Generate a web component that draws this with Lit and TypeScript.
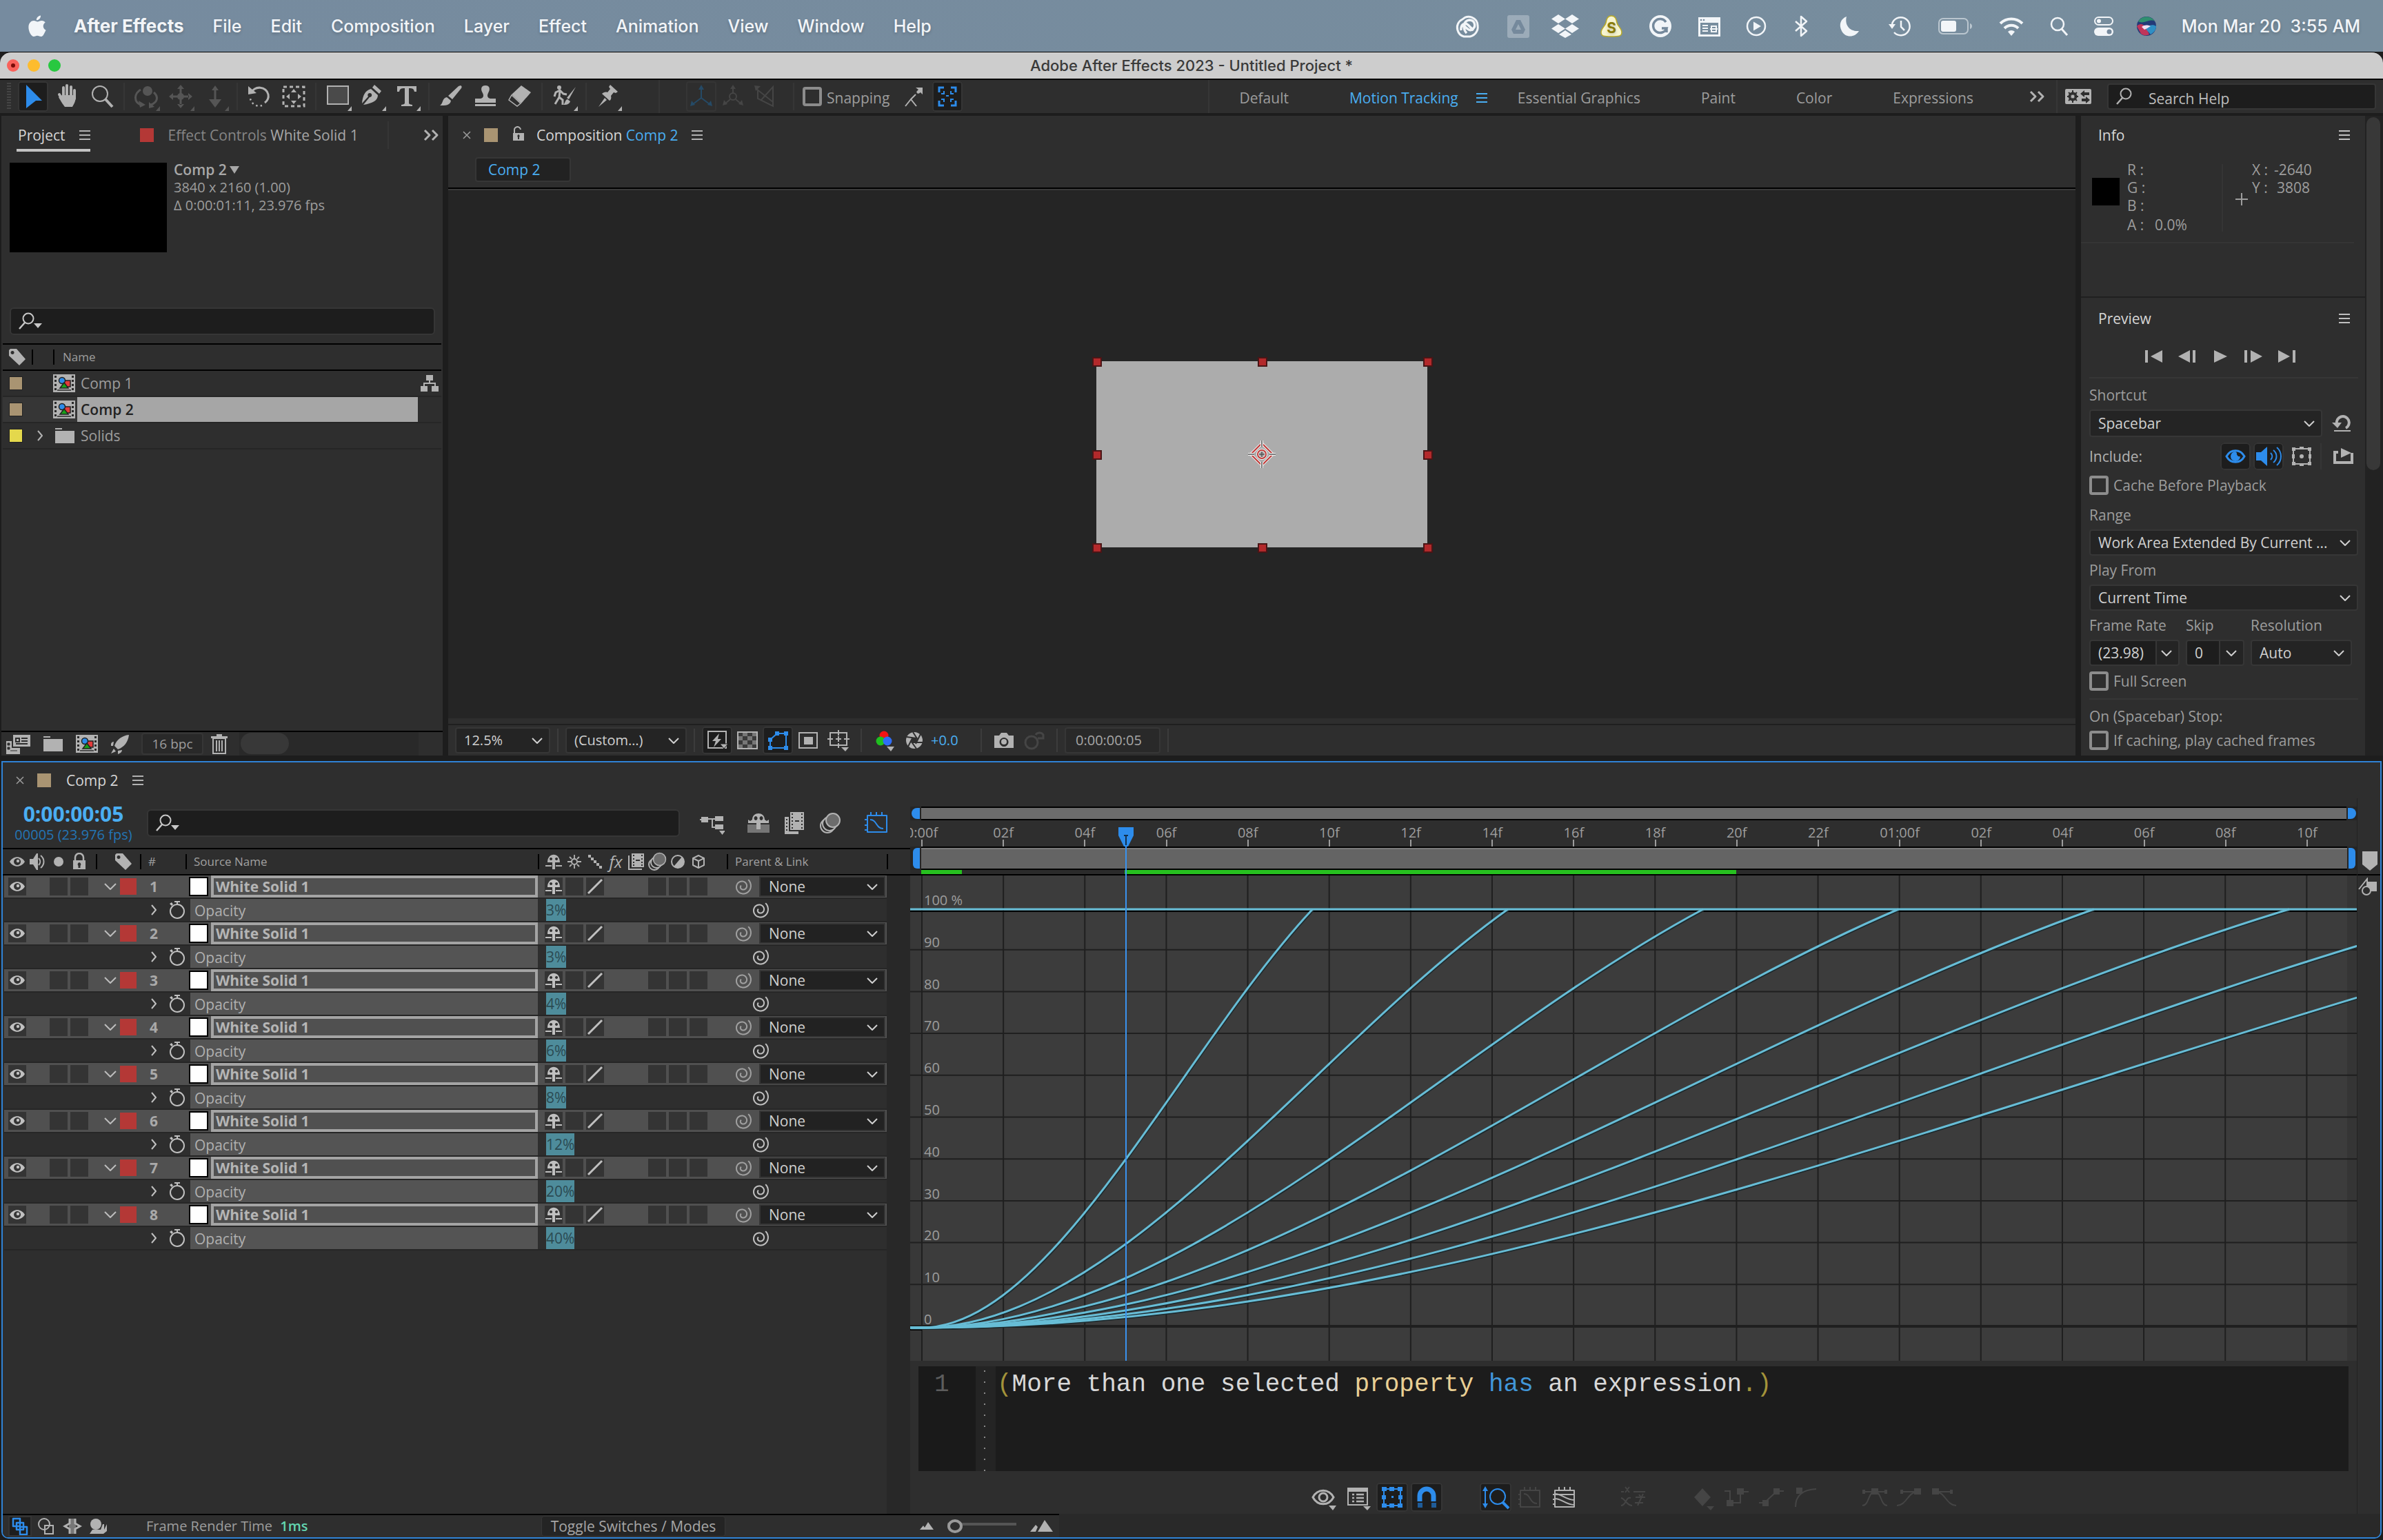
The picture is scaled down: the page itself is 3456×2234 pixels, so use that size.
import { LitElement, html, css, svg, nothing, TemplateResult, SVGTemplateResult } from "lit";
import { customElement } from "lit/decorators.js";
import { classMap } from "lit/directives/class-map.js";

/** An icon drawn around the origin, one unit per pixel. */
const ic = (w: number, h: number, body: SVGTemplateResult | SVGTemplateResult[]) =>
  html`<svg class="ic" aria-hidden="true" width=${w} height=${h} viewBox="${-w / 2} ${-h / 2} ${w} ${h}">${body}</svg>`;

const line = (d: string, w = 2) =>
  svg`<path d=${d} fill="none" stroke="currentColor" stroke-width=${w} stroke-linejoin="round"/>`;
const fill = (d: string) => svg`<path d=${d}/>`;
const corner = svg`<path d="M14 21h6v-7z"/>`;

/* ---------- menu bar ---------- */
const apple = ic(30, 36, svg`<path d="M5-15.500c.4 3.500-2.800 7-6.100 6.800C-1.500-12 1.600-15.200 5-15.500zM10.800 9.200C9.600 12 8 15 5.400 15c-2.100 0-2.800-1.300-5.300-1.300S-3.200 15-5.100 15C-8.400 15-12.600 8-12.600 1.500-12.600-4.800-8.600-8-5-8c2.300 0 4 1.500 5.500 1.500C1.900-6.500 3.900-8.200 6.800-8c2 .1 3.700.9 4.900 2.600C7.300-2.600 8 3.900 12.600 5.700z"/>`);

const status: TemplateResult[] = [
  ic(80, 36, svg`<path d="M-14 6A13 13 0 0 1-7-10 13 13 0 0 1 15-1 14 14 0 0 1 4 15h-9A13 13 0 0 1-14 6z" fill="none" stroke="currentColor" stroke-width="3"/><path d="M-9 6c-1-8 5-12 10-8L9 6M-1 10C-7 4-6-8 3-9c8 0 10 9 5 13-4 4-8 0-12-4" fill="none" stroke="currentColor" stroke-width="3.500"/>`),
  ic(68, 36, svg`<rect x="-16" y="-16" width="32" height="33" rx="3" opacity=".3"/><path d="M-3-9h6l7 14-3 6H-7l-3-6zM0-3l-4 8h8z" fill="#75899c" fill-rule="evenodd"/>`),
  ic(68, 36, svg`<path d="M-10-17l10 6.500-10 6.500-10-6.500zM10-17l10 6.500L10-4 0-10.500zM-10-3L0 3.500-10 10l-10-6.500zM10-3l10 6.500L10 10 0 3.500zM0 6l9 6-9 5-9-5z"/>`),
  ic(66, 36, svg`<path d="M0-15c6 0 7 5 8 10s7 8 7 14-5 6-15 6-15 0-15-6 6-9 7-14 2-10 8-10z" fill="#f7f5d0" stroke="#b9aa28" stroke-width="1.500"/><text x="0" y="10" text-anchor="middle" font-size="21" font-weight="700" fill="#8a7c0c">S</text>`),
  ic(76, 36, svg`<circle r="16"/><path d="M8-6A10 10 0 1 0 9 3H2M9 3v6" fill="none" stroke="#75899c" stroke-width="3.500"/>`),
  ic(66, 36, svg`<path d="M-16-13h32v28h-32zM-13-5v17h26V-5z" fill-rule="evenodd"/><circle cx="-12" cy="-9" r="1.300" fill="#75899c"/><circle cx="-8" cy="-9" r="1.300" fill="#75899c"/><path d="M-10-1h8M-10 3h8M-10 7h8M3 0h7v8H3zM1 4h11" fill="none" stroke="currentColor" stroke-width="2"/>`),
  ic(70, 36, svg`<circle r="13" fill="none" stroke="currentColor" stroke-width="2.500"/><path d="M-4-6.500L7 0-4 6.500z"/>`),
  ic(60, 36, line("M-8-7L8 7 0 14v-28l8 7L-8 7", 2.500)),
  ic(80, 36, fill("M-4-14C-7-2 0 8 14 7 8 17-6 17-11 7-16-3-12-11-4-14z")),
  ic(68, 36, svg`<path d="M-12-3A13 13 0 1 1-9 9M1-8V1l5 5" fill="none" stroke="currentColor" stroke-width="2.500"/><path d="M-17-3h10l-5 7z"/>`),
  ic(92, 36, svg`<rect x="-24" y="-11" width="42" height="22" rx="6" fill="none" stroke="currentColor" stroke-width="2" opacity=".55"/><rect x="-21" y="-8" width="22" height="16" rx="3"/><path d="M21-4c4 1 4 7 0 8z" opacity=".55"/>`),
  ic(70, 36, svg`<path d="M-16-4a23 23 0 0 1 32 0M-10 3a14 14 0 0 1 20 0" fill="none" stroke="currentColor" stroke-width="4"/><path d="M-5 8a7 7 0 0 1 10 0l-5 6z"/>`),
  ic(68, 36, svg`<circle cx="-2" cy="-3" r="9" fill="none" stroke="currentColor" stroke-width="2.500"/><path d="M4 4l8 9" stroke="currentColor" stroke-width="3"/>`),
  ic(62, 36, svg`<rect x="-13" y="-13" width="26" height="11" rx="5.500" fill="none" stroke="currentColor" stroke-width="2"/><circle cx="-7" cy="-7.500" r="3"/><rect x="-14" y="2" width="28" height="12" rx="6"/><circle cx="8" cy="8" r="3.500" fill="#75899c"/>`),
  ic(62, 36, svg`<circle r="14" fill="#243a78"/><path d="M-12-7A14 14 0 0 1 12-7C4-12-4-2-12-7z" fill="#2f8f6f"/><path d="M-14 0C-6-8 0 2 4 12 0 14-4 14-8 11z" fill="#c0355a"/><path d="M14 0C8-4 2 0-2 3l8 9c5-3 8-7 8-12z" fill="#2f8fc4"/><path d="M-7 1c4-3 8-3 13-1-4 2-6 4-9 5z" fill="#f1dff2"/>`),
];

/* ---------- tools ---------- */
const tool = (b: any) => ic(44, 44, b);
const tools: Array<[string, TemplateResult, string]> = [
  ["Selection", tool(fill("M-10-17l23 23-9 0-14 11z")), "on"],
  ["Hand", tool(svg`<path d="M-6-13v13M-1-16v16M5-14V0M10-9V3M-12-3L-7 6" stroke="currentColor" stroke-width="4" stroke-linecap="round" fill="none"/><path d="M-8-2H12C12 8 9 11 7 15H-4C-7 11-9 8-13 1z"/>`), ""],
  ["Zoom", tool(svg`<circle cx="-3" cy="-4" r="11" fill="none" stroke="currentColor" stroke-width="2"/><path d="M5 4l10 11" stroke="currentColor" stroke-width="4"/>`), ""],
  ["|", html``, ""],
  ["Orbit", tool(svg`<circle cx="2" cy="-8" r="7"/><path d="M-8-10C-18-4-18 8-8 12M11-6c7 6 6 14-4 18" fill="none" stroke="currentColor" stroke-width="3"/><path d="M-11 6l2 10 8-4zM4 8l0 9 8-2z"/>${corner}`), "dim"],
  ["Pan camera", tool(svg`<circle r="5"/><path d="M0-17l5 6H-5zM0 17l5-6H-5zM-17 0l6-5V5zM17 0l-6-5V5zM-12-1.500h24v3h-24zM-1.500-12h3v24h-3z"/>${corner}`), "dim"],
  ["Dolly", tool(svg`<path d="M0-16l5 7H-5zM-1.500-10h3V4h-3zM0 16L-9 4H9z"/>${corner}`), "dim"],
  ["|", html``, ""],
  ["Rotate", tool(svg`<path d="M-12-5A13 12 0 0 1 13-3c1 5-1 9-5 12" fill="none" stroke="currentColor" stroke-width="3"/><path d="M-16-15v12l12-2z"/><path d="M4 13A13 13 0 0 1-13 3" fill="none" stroke="currentColor" stroke-width="2.500" stroke-dasharray="2.500 4"/>`), ""],
  ["Pan behind", tool(svg`<rect x="-15" y="-14" width="30" height="28" fill="none" stroke="currentColor" stroke-width="3" stroke-dasharray="5 4"/><path d="M0-11l4 5h-8zM0 11l4-5h-8zM-11 0l5-4v8zM11 0L6-4v8z"/>`), ""],
  ["|", html``, ""],
  ["Rectangle", tool(svg`<rect x="-15" y="-15" width="30" height="26" fill="#4a4a4a" stroke="currentColor" stroke-width="2"/>${corner}`), ""],
  ["Pen", tool(svg`<path d="M3-17l10 9-3 4-10-9zM-2-11l10 9C8 6 0 10-13 12L-4 1a3 3 0 1 0-2-1l-9 10C-14-2-10-9-2-11z"/>${corner}`), ""],
  ["Text", tool(svg`<path d="M-14-15H14v8h-3c-1-4-2-5-8-5V9c0 2 1 2 5 3v2H-8v-2c4-1 5-1 5-3v-21c-6 0-7 1-8 5h-3z"/>${corner}`), ""],
  ["|", html``, ""],
  ["Brush", tool(svg`<path d="M14-16c2 1 2 2 1 4L2 4-4-1 11-15zM-6 1l6 5C-1 13-8 13-16 13-11 10-13 2-6 1z"/>`), ""],
  ["Clone stamp", tool(svg`<path d="M0-16c7 0 7 6 4 11C2-1 3 2 7 3h8v6h-30V3h8c4-1 5-4 3-8-3-5-3-11 4-11zM-15 11h30v3h-30z"/>`), ""],
  ["Eraser", tool(svg`<path d="M2-16L16-6 2 10-12-3z"/><path d="M-12-2l13 12-5 4-12-9z" fill="none" stroke="currentColor" stroke-width="1.500"/>`), ""],
  ["|", html``, ""],
  ["Roto brush", tool(svg`<circle cx="-7" cy="-13" r="3"/><path d="M-14 0l2-6 6-3 5 5 5 1M-6-8l-1 9-6 10M-7 1l5 4v7" fill="none" stroke="currentColor" stroke-width="3"/><path d="M17-14L7 4 4 2zM5 4l4 3C7 12 3 12-1 12 2 10 1 5 5 4z"/>${corner}`), ""],
  ["|", html``, ""],
  ["Puppet pin", tool(svg`<path d="M3-17l11 10-3 2-3-1-4 5c1 3 0 6-2 7L-9-4c2-2 5-3 8-2l4-5-2-3zM-5 2l3 3-12 10z"/>${corner}`), ""],
];
const axis = (b: SVGTemplateResult) => ic(44, 44, b);
const axes: Array<[string, TemplateResult, string]> = [
  ["Local axis", axis(svg`<path d="M0 2v-14M0 2l-12 9M0 2l12 9" stroke="currentColor" stroke-width="2" fill="none"/><path d="M0-17l4 7h-8zM-16 14l2-8 5 6zM16 14l-2-8-5 6z"/>`), "axis-on"],
  ["World axis", axis(svg`<circle r="5" fill="none" stroke="currentColor" stroke-width="2"/><path d="M0-5v-8M-4 4l-8 7M4 4l8 7" stroke="currentColor" stroke-width="2"/><path d="M0-17l4 6h-8zM-15 13l2-8 5 6zM15 13l-2-8-5 6z"/>`), "faint"],
  ["View axis", axis(svg`<path d="M-10-10V3L12 14V-14L-6 6M-12-11L12 8" stroke="currentColor" stroke-width="2" fill="none"/><path d="M-15-16l9 1-7 7z"/>`), "faint"],
];

/** A pick whip: nearly two turns winding in from the upper right. */
const spiral = () => {
  const pts: string[] = [];
  for (let i = 0; i <= 48; i++) {
    const a = ((-50 + i * 13) * Math.PI) / 180;
    const r = 12.8 - (i / 48) * 10.3;
    pts.push(`${(Math.cos(a) * r).toFixed(1)} ${(Math.sin(a) * r).toFixed(1)}`);
  }
  return "M" + pts.join("L");
};

const burger = ic(16, 16, fill("M-8-7H8v2H-8zM-8-1H8v2H-8zM-8 5H8v2H-8z"));
const more = ic(24, 18, line("M-10-7l7 7-7 7M1-7l7 7-7 7", 3));
const chev = ic(18, 12, line("M-7-3L0 4l7-7", 2));
const chevR = ic(12, 18, line("M-3-7L3 0l-6 7", 2));
const chevD = ic(18, 14, line("M-8-4L0 4l8-8", 2));
const lens = ic(38, 28, svg`<circle cx="-4" cy="-4" r="7.500" fill="none" stroke="currentColor" stroke-width="2"/><path d="M-9 2l-8 9" stroke="currentColor" stroke-width="2.500"/><path d="M4 3h12l-6 7z"/>`);
const lensPlain = ic(28, 28, svg`<circle cx="3" cy="-4" r="7.500" fill="none" stroke="currentColor" stroke-width="2"/><path d="M-2 2l-8 9" stroke="currentColor" stroke-width="2.500"/>`);
const cross = ic(14, 14, line("M-5-5L5 5M5-5L-5 5", 1.500));
const tag = ic(26, 26, svg`<path d="M-12-10l2-2H-1L12 3 3 12-12-2zM-7-9a2.500 2.500 0 1 0 .1 0z" fill-rule="evenodd"/>`);
const filmBody = svg`<path d="M-16-13h32v26h-32z"/><path d="M-14-11h3v3h-3zM-14-5h3v3h-3zM-14 1h3v3h-3zM-14 7h3v3h-3zM11-11h3v3h-3zM11-5h3v3h-3zM11 1h3v3h-3zM11 7h3v3h-3z" fill="#2a2a2a"/><rect x="0" y="-4" width="9" height="9" fill="#e23b3b" stroke="#222" stroke-width="1.500"/><circle cx="-3" cy="-4" r="4.500" fill="#2d8ceb" stroke="#222" stroke-width="1.500"/><path d="M0-1l6 8H-6z" fill="#18a018" stroke="#222" stroke-width="1.500"/><path d="M-10 10h20" stroke="#2a2a2a" stroke-width="1.500"/>`;
const film = ic(34, 28, filmBody);
const folder = ic(28, 24, fill("M-14-11h10v2h-10zM-14-7h28v18h-28z"));
const eye = ic(26, 22, svg`<path d="M-11 0C-6-9 6-9 11 0 6 9-6 9-11 0zM0-5a5 5 0 1 0 .1 0z" fill-rule="evenodd"/><circle cx="1" cy="-1" r="2.200"/>`);
const speaker = ic(26, 26, svg`<path d="M-12-4h5l5-8v24l-5-8h-5z"/><path d="M1-5c3 3 3 7 0 10M4-9c6 5 6 13 0 18" fill="none" stroke="currentColor" stroke-width="2"/><path d="M-2-12h2v24h-2z"/>`);
const lock = ic(26, 26, svg`<path d="M-9-2H9v13H-9zM0 1a3 3 0 0 0-1.500 5v3h3V6A3 3 0 0 0 0 1z" fill-rule="evenodd"/><path d="M-6-2v-4a6 6 0 0 1 12 0v4" fill="none" stroke="currentColor" stroke-width="2.500"/>`);
const unlock = ic(20, 26, svg`<path d="M-8-3H8v11H-8zM0-1a2.500 2.500 0 0 0-1 4v3h2V3A2.500 2.500 0 0 0 0-1z" fill-rule="evenodd"/><path d="M-6-3v-4a4.500 4.500 0 0 1 9-1" fill="none" stroke="currentColor" stroke-width="2"/>`);
const shy = ic(26, 24, svg`<path d="M-9 1C-9-14 9-14 9 1H2v10h-4V1zM-4-6a2 2 0 1 0 .1 0zM4-6a2 2 0 1 0 .1 0z" fill-rule="evenodd"/><path d="M-12 6h9M3 6h9" stroke="currentColor" stroke-width="2"/>`);
const sun = ic(26, 24, svg`<circle r="4" fill="none" stroke="currentColor" stroke-width="2"/><path d="M0-10v5M0 5v5M-10 0h5M5 0h5M-7-7l3 3M7 7L4 4M-7 7l3-3M7-7L4-4" stroke="currentColor" stroke-width="1.800"/>`);
const steps = ic(26, 24, fill("M-10-10h4v4h-4zM-6-6h4v4h-4zM-2-2h4v4h-4zM2 2h4v4H2zM6 6h4v4H6z"));
const blend = ic(26, 26, svg`<path d="M-7-12h18V8H-7zM-5-10v2h2v-2zM-5-5v2h2v-2zM-5 0v2h2v-2zM-5 4v2h2V4zM7-10v2h2v-2zM7-5v2h2v-2zM7 0v2h2v-2zM7 4v2h2V4zM-1-3v2h6v-2z" fill-rule="evenodd"/><path d="M-11-9v20H8" fill="none" stroke="currentColor" stroke-width="2"/>`);
const blur = ic(28, 28, svg`<circle cx="-4" cy="4" r="8" fill="#2e2e2e" stroke="currentColor" stroke-width="2"/><circle cx="-1" cy="1" r="8" fill="#2e2e2e" stroke="currentColor" stroke-width="2"/><circle cx="3.500" cy="-3.500" r="9" fill="#6c6c6c" stroke="currentColor" stroke-width="1.500"/>`);
const adjust = ic(26, 24, svg`<circle r="9" fill="none" stroke="currentColor" stroke-width="2"/><path d="M6-7A9 9 0 0 1-6 7z"/>`);
const cube = ic(26, 24, line("M0-9l8 4V5L0 9l-8-4V-5zM-8-5L0-1l8-4M0-1V9", 2));
const quality = ic(26, 26, line("M-10 10L10-10", 3));
const whip = ic(26, 26, line(spiral(), 2));
const stopwatch = ic(26, 28, svg`<circle cx="0" cy="2" r="10" fill="none" stroke="currentColor" stroke-width="2"/><path d="M-4-13h8v2h-8zM-1-12h2v4h-2zM-11-9l3-2 2 3-2 2z"/>`);

/* ---------- footer and graph icons ---------- */
const mainIcons: Record<string, TemplateResult> = {
  interpret: ic(36, 32, svg`<path d="M-8-13h25V4H-8z"/><path d="M-4-8h5v5h-5zM4-8h9M4-4h9M-4 0h17" fill="none" stroke="#2e2e2e" stroke-width="2"/><path d="M-18-4h8V6H2v9h-20z"/><path d="M-16-1h3v3h-3zM-16 5h3v3h-3zM-12 10h10" fill="#2e2e2e" stroke="#2e2e2e"/>`),
  rocket: ic(26, 30, fill("M13-13C3-12-5-6-8 3l5 5C6 5 12-3 13-13zM-9-3c-3 0-5 3-4 6h3zM3 9c0 3-3 5-6 6V10zM-9 7l-4 7 7-3z")),
  trash: ic(26, 32, svg`<path d="M-9-8H9V14H-9z" fill="none" stroke="currentColor" stroke-width="2"/><path d="M-12-11h24v3h-24zM-4-14h8v3h-8zM-5-5h2v16h-2zM-1-5h2v16h-2zM3-5h2v16H3z"/>`),
  flow: ic(28, 28, svg`<path d="M-5-12H5v8H-5zM-13 4h10v8h-10zM3 4h10v8H3z"/><path d="M0-4v4M-8 4V0H8v4" fill="none" stroke="currentColor" stroke-width="2"/>`),
  fast: ic(36, 32, svg`<path d="M-13-13H13V11H-13z" fill="none" stroke="currentColor" stroke-width="2"/><path d="M3-10L-7 1h5l-3 9L6-2H1z"/><path d="M4 5h12l-6 7z" stroke="#1d1d1d"/>`),
  checker: ic(32, 32, svg`<path d="M-14-12h28v24h-28z" fill="#777"/><path d="M-14-12h7v6h-7zM0-12h7v6H0zM-7-6h7v6h-7zM7-6h7v6H7zM-14 0h7v6h-7zM0 0h7v6H0zM-7 6h7v6h-7zM7 6h7v6H7z" fill="#3a3a3a"/><path d="M-14-12h28v24h-28z" fill="none" stroke="currentColor" stroke-width="2"/>`),
  mask: ic(36, 32, svg`<path d="M-11 11V-1L-1-10h13v21z" fill="none" stroke="currentColor" stroke-width="2"/><path d="M-14 8h6v6h-6zM9 8h6v6H9zM9-13h6v6H9zM-4-13h6v6h-6zM-14-4h6v6h-6z"/>`),
  region: ic(32, 32, svg`<rect x="-13" y="-11" width="26" height="22" fill="none" stroke="currentColor" stroke-width="2"/><rect x="-6" y="-5" width="13" height="11"/>`),
  grid: ic(36, 34, svg`<rect x="-12" y="-11" width="24" height="18" fill="none" stroke="currentColor" stroke-width="2"/><path d="M0-15v8M0 4v7M-16-2h8M8-2h8M-4-2h8M0-6v8" stroke="currentColor" stroke-width="2"/><path d="M4 10h11l-5 6z"/>`),
  rgb: ic(30, 34, svg`<circle cx="0" cy="-7" r="6.500" fill="#f21414"/><circle cx="-5" cy="1" r="6.500" fill="#1fc01f"/><circle cx="5" cy="1" r="6.500" fill="#2f6df6"/><path d="M4 9h11l-5 7z"/>`),
  aperture: ic(30, 30, svg`<circle r="12"/><path d="M-11-5L3-3M-2-12l7 11M9-9L2 5M12 3L-3 3M3 12L-5 1M-9 9l6-12" stroke="#2e2e2e" stroke-width="2"/><circle r="4" fill="#2e2e2e"/>`),
  camera: ic(32, 28, svg`<path d="M-14-7h7l3-4h8l3 4h7V11h-28zM0-4a6.500 6.500 0 1 0 .1 0z" fill-rule="evenodd"/><circle cy="2" r="4"/>`),
  snap: ic(34, 30, svg`<circle cx="-4" cy="3" r="9" fill="none" stroke="currentColor" stroke-width="3"/><path d="M2-8a6 5 0 0 1 11 0v5H5" fill="none" stroke="currentColor" stroke-width="3"/>`),
};

const graphTools: Array<Array<[string, TemplateResult, string]>> = [
  [
    ["Show properties", ic(42, 38, svg`<path d="M-15 0C-8-13 8-13 15 0 8 13-8 13-15 0z" fill="none" stroke="currentColor" stroke-width="3"/><circle r="6" fill="none" stroke="currentColor" stroke-width="3"/><path d="M8 12h11l-5 7z"/>`), ""],
    ["Graph type", ic(42, 38, svg`<path d="M-14-13h28v24h-28z" fill="none" stroke="currentColor" stroke-width="2"/><path d="M-14-13h28v5h-28z"/><path d="M-8-4h3M-2-4H9M-8 1h3M-2 1H9M-8 6h3M-2 6H9" stroke="currentColor" stroke-width="2.500"/><path d="M8 13h11l-5 6z"/>`), ""],
    ["Transform box", ic(42, 38, svg`<rect x="-12" y="-12" width="24" height="24" fill="none" stroke="currentColor" stroke-width="2"/><path d="M-15-15h7v6h-7zM-4-15h7v6h-7zM8-15h7v6H8zM-15 9h7v6h-7zM-4 9h7v6h-7zM8 9h7v6H8zM-15-3h6v6h-6zM9-3h6v6H9zM-1-2h3v3h-3z"/>`), "on"],
    ["Snap", ic(42, 38, svg`<path d="M-10 6V-2a10 10 0 0 1 20 0v8" fill="none" stroke="currentColor" stroke-width="7"/><path d="M-13 8h7v7h-7zM7 8h7v7H7z" fill="#1f5c99"/>`), "on"],
  ],
  [
    ["Auto-zoom", ic(42, 38, svg`<circle cx="3" cy="-1" r="11" fill="none" stroke="currentColor" stroke-width="2"/><path d="M10 7l9 9" stroke="currentColor" stroke-width="4"/><path d="M-15-10v22" stroke="currentColor" stroke-width="2"/><path d="M-15-16l4 7h-8zM-15 16l4-7h-8z"/>`), "on"],
    ["Fit selection", ic(42, 38, line("M-14-10h28v24h-28zM-9-5c10 0 8 14 19 14M-8-15v5M0-15v5M8-15v5M-17-4h3M-17 3h3M-17 10h3", 2)), "faint"],
    ["Fit all graphs", ic(42, 38, line("M-14-10h28v24h-28zM-14-5C-4-5 2 4 14 4M-14 2C-4 2 2 11 14 11M-14-4h28M-8-15v5M0-15v5M8-15v5M-17-4h3M-17 3h3M-17 10h3", 2)), ""],
  ],
  [["Separate dimensions", ic(42, 38, line("M-12-15l6 8M-6-15l-6 8M-18-8h4M0-8H17M-18 12C-10 12-12-1-4 1M-18 1C-12 2-10 12-2 12M3 0h14M2 8h12M8-4l3 4M14-5L6 12", 2)), "faint"]],
  [
    ["Edit keyframes", ic(42, 38, svg`<path d="M0-13L12 0 0 13-12 0z"/><path d="M6 13h11l-5 6z"/>`), "faint"],
    ["Hold", ic(42, 38, svg`<path d="M-18-9h8V8M5-9v17h-12" fill="none" stroke="currentColor" stroke-width="2"/><path d="M-15 4h10v9h-10zM0-13h10v9H0zM10-9h7v2h-7z"/>`), "faint"],
    ["Linear", ic(42, 38, svg`<path d="M-18 8h8M-8 6L7-8M8-9h10" fill="none" stroke="currentColor" stroke-width="2"/><path d="M-13 4h9v9h-9zM3-13h9v9H3z"/>`), "faint"],
    ["Auto Bezier", ic(42, 38, svg`<path d="M-15 14C-15 0-8-11 15-12" fill="none" stroke="currentColor" stroke-width="2"/><path d="M-14-14h9v9h-9z"/>`), "faint"],
  ],
  [
    ["Easy ease", ic(42, 38, svg`<path d="M-18 12C-8 12-10-8 0-8S8 12 18 12M-17-8h34" fill="none" stroke="currentColor" stroke-width="2"/><path d="M-5-13H5v9H-5zM-18-11h4v6h-4zM14-11h4v6h-4z"/>`), "faint"],
    ["Easy ease in", ic(42, 38, svg`<path d="M-18 12C-4 12-2-8 12-8M-10-8H10" fill="none" stroke="currentColor" stroke-width="2"/><path d="M7-13h10v9H7zM-13-11h4v6h-4z"/>`), "faint"],
    ["Easy ease out", ic(42, 38, svg`<path d="M18 12C4 12 2-8-12-8M10-8h-20" fill="none" stroke="currentColor" stroke-width="2"/><path d="M-17-13h10v9h-10zM9-11h4v6H9z"/>`), "faint"],
  ],
];

const transport: Array<[string, TemplateResult]> = [
  ["First frame", ic(26, 20, fill("M-13-9h4V9h-4zM12-9V9L-5 0z"))],
  ["Previous frame", ic(26, 20, fill("M4-9V9l-17-9zM8-9h4V9H8z"))],
  ["Play", ic(26, 20, fill("M-9-9L10 0-9 9z"))],
  ["Next frame", ic(26, 20, fill("M-13-9h4V9h-4zM-4-9v18l17-9z"))],
  ["Last frame", ic(26, 20, fill("M-12-9L5 0-12 9zM9-9h4V9H9z"))],
];

const menus = ["File", "Edit", "Composition", "Layer", "Effect", "Animation", "View", "Window", "Help"];
const opacities = [3, 3, 4, 6, 8, 12, 20, 40];
const rulerLabels = ["0:00f", "02f", "04f", "06f", "08f", "10f", "12f", "14f", "16f", "18f", "20f", "22f", "01:00f", "02f", "04f", "06f", "08f", "10f"];

/* Value graph geometry: 35 frames wide, each ramp lasts 0.4 s plus 0.2 s per layer. */
const X0 = 17, FRAME = 59.07, Y0 = 656, Y100 = 49, FPS = 23.976;
const ramp = (seconds: number) => {
  const w = seconds * FPS * FRAME, h = Y0 - Y100;
  return `M0 ${Y0}H${X0}C${X0 + w / 3} ${Y0} ${X0 + (w * 2) / 3} ${Y0 - (h * 2) / 3} ${X0 + w} ${Y100}`;
};
const ramps = [0.4, 0.6, 0.8, 1, 1.2, 1.4, 1.6, 1.8].map(ramp);

@customElement("app-root")
export class AppRoot extends LitElement {
  static styles = css`
    :host {
      display: flex; flex-direction: column; min-height: 100vh; background: #1d1d1d; color: #9d9d9d;
      font: 400 21px/26px "Open Sans", "Noto Sans", sans-serif; overflow: hidden;
      --blue: #2d8ceb; --sky: #4aaef2; --panel: #2e2e2e; --well: #1d1d1d; --edge: #363636; --icon: #b2b2b2;
    }
    * { box-sizing: border-box; }
    button, select, input { font: inherit; color: inherit; margin: 0; }
    button { background: none; border: 0; padding: 0; display: flex; align-items: center; justify-content: center; }
    svg.ic { fill: currentColor; display: block; flex: none; }
    h2 { font: inherit; margin: 0; color: #d6d6d6; }
    .icon { color: var(--icon); }
    .grow { flex: 1; min-width: 0; }
    .sky { color: var(--sky); }

    .menubar { display: flex; align-items: center; height: 75px; padding: 0 33px 0 39px; background: linear-gradient(90deg, #768b9f, #778d9d); color: #f2f5f8; font: 500 25px/30px Inter, sans-serif; text-shadow: 0 2px 4px #0003; }
    .menubar nav { display: flex; gap: 42px; margin-left: 38px; }
    .menubar a { color: inherit; text-decoration: none; }
    .menubar .app { font-weight: 700; font-size: 26px; }
    .menubar time { margin-left: 20px; white-space: pre; }

    .titlebar { display: grid; grid-template-columns: 1fr auto 1fr; align-items: center; height: 41px; border: solid #000; border-width: 1px 0 2px; border-radius: 16px 16px 0 0; background: #cdcdcd; color: #3a3a3a; font: 500 22px/26px Inter, sans-serif; }
    .lights { display: flex; gap: 12px; margin-left: 10px; }
    .lights i { width: 18px; height: 18px; border-radius: 50%; background: #f9615a; display: grid; place-items: center; }
    .lights i:nth-child(1)::after { content: ""; width: 6px; height: 6px; border-radius: 50%; background: #7a0c08; }
    .lights i:nth-child(2) { background: #fdbc2e; }
    .lights i:nth-child(3) { background: #28c840; }

    .toolbar { display: flex; align-items: center; height: 48px; background: var(--panel); padding: 0 10px; }
    .grip { width: 6px; height: 40px; margin-right: 10px; background: repeating-linear-gradient(#454545 0 2px, transparent 2px 4px); }
    .tools { display: flex; align-items: center; gap: 6px; }
    .tools button, .axes button { width: 44px; height: 44px; border-radius: 4px; color: var(--icon); }
    .vr { width: 2px; height: 40px; background: #363636; margin: 0 3px; flex: none; }
    .vr.tall { height: 48px; }
    .vr.after-tools { margin-left: 51px; }
    .vr.flush { margin: 0; }
    .vr.before-sync { margin: 0 10px 0 0; }
    button.on { background: var(--well); color: var(--blue) !important; box-shadow: inset 0 0 0 2px #353535; }
    button.on.white { color: var(--icon) !important; }
    button.dim { color: #555 !important; }
    button.faint { color: #454545 !important; }
    .axes { display: flex; align-items: center; gap: 2px; margin: 0 16px 0 35px; }
    .axes button.axis-on { color: #254a66; box-shadow: inset 0 0 0 2px #353535; }
    .check { display: flex; align-items: center; gap: 7px; height: 28px; white-space: nowrap; }
    .check input { appearance: none; width: 28px; height: 28px; border: 4px solid #8c8c8c; border-radius: 4px; flex: none; }
    .toolbar .check { margin-left: 9px; }
    .toolbar .check span { padding-top: 4px; }
    .snap { margin: 0 14px 0 22px; color: var(--icon); }
    .toolbar .on.big { width: 44px; height: 44px; border-radius: 4px; }
    .spaces { display: flex; align-items: center; }
    .spaces button { padding: 4px 44px 0; height: 44px; white-space: nowrap; }
    .spaces button.cur { padding: 4px 0 0 44px; color: var(--sky); gap: 26px; }
    .ws-more { padding: 0 15px 0 37px; }
    .help { display: flex; align-items: center; width: 390px; height: 38px; margin-left: 22px; background: var(--well); border: 2px solid var(--edge); border-radius: 4px; padding: 0 8px; gap: 22px; color: var(--icon); }
    .help input { width: 0; flex: 1; background: none; border: 0; padding: 6px 0 0; outline: 0; color: #bdbdbd; }
    .help input::placeholder { color: #bdbdbd; }

    .workspace { display: grid; grid-template-columns: 640px minmax(0, 1fr) 438px; gap: 8px; padding: 4px 0 8px 2px; }
    .panel { background: var(--panel); display: flex; flex-direction: column; min-width: 0; }
    .tabs { display: flex; align-items: center; height: 56px; flex: none; }
    .tabs .icon { flex: none; }
    .sq { width: 20px; height: 20px; background: #a99472; flex: none; }
    .sq.red { background: #b43836; }

    .project .tabs { padding: 0 4px 0 22px; }
    .ptab { align-self: flex-start; height: 52px; border-bottom: 4px solid #c3c3c3; padding: 8px 0 0 2px; gap: 20px; color: #d6d6d6; }
    .effects { margin-left: 72px; gap: 21px; color: #858585; }
    .effects b { font-weight: 400; color: #a6a6a6; }
    .project .vr { margin: 0 50px 0 42px; }
    .summary { display: flex; gap: 10px; padding: 9px 12px 0; font-size: 20px; }
    .thumb { width: 228px; height: 130px; margin-top: 3px; background: #000; }
    .summary strong { display: flex; align-items: center; gap: 2px; font-weight: 600; font-size: 21px; color: #a8a8a8; }
    .search { display: flex; align-items: center; height: 40px; background: var(--well); border: 2px solid var(--edge); border-radius: 6px; padding: 0 10px; color: #c8c8c8; }
    .search input { flex: 1; min-width: 0; background: none; border: 0; outline: 0; }
    .project .search { margin: 80px 11px 12px 12px; }
    table { display: block; border-spacing: 0; }
    thead, tbody { display: block; }
    td, th { padding: 0; font-weight: 400; text-align: left; min-width: 0; }
    tr { display: grid; align-items: center; }
    .plist { flex: 1; margin: 0 2px; }
    .plist tr { grid-template-columns: 42px 30px 36px 1fr 34px; height: 38px; border-bottom: 2px solid #262626; }
    .plist thead tr { height: 40px; border: solid #000; border-width: 2px 0; font-size: 17px; grid-template-columns: 42px 31px 1fr; }
    .plist thead tr th + th { border-left: 2px solid #000; height: 22px; line-height: 22px; padding-left: 12px; }
    .plist thead th.icon { padding-left: 8px; }
    .chip { display: block; width: 18px; height: 18px; margin-left: 10px; background: #a99472; box-shadow: 0 0 0 1px #222; }
    .chip.y { background: #e4d84c; }
    .twirl { padding-left: 6px; }
    .fold { padding-left: 4px; }
    .plist td:nth-child(4) { padding-left: 5px; line-height: 36px; }
    .plist .flowc { padding-left: 3px; }
    .plist .sel { background: linear-gradient(90deg, #363636 600px, var(--panel) 0); }
    .plist .sel td:nth-child(4) { background: #a6a6a6; color: #222; font-weight: 600; }
    .pfoot { display: flex; align-items: center; height: 36px; border-top: 2px solid #000; padding-left: 7px; gap: 18px; color: var(--icon); }
    .pfoot .depth { display: flex; align-items: center; gap: 10px; }
    .pfoot .bpc { border: 2px solid var(--edge); border-radius: 4px; background: #292929; width: 90px; height: 32px; font-size: 19px; color: #9d9d9d; }
    .hbar { align-self: stretch; width: 260px; background: #292929; padding: 1px 2px; margin-left: -2px; }
    .hbar i { display: block; width: 70px; height: 31px; border-radius: 16px; background: #383838; }

    .comp .tabs { padding-left: 20px; }
    .comp .tabs .sq { margin: 0 20px 0 18px; }
    .comp .tabs h2 { margin: 0 20px 0 16px; }
    .crumb { padding: 4px 0 8px 39px; border-bottom: 2px solid #000; }
    .crumb button { width: 139px; height: 36px; background: #222; border: 2px solid var(--edge); border-radius: 4px; color: var(--sky); justify-content: flex-start; padding-left: 17px; }
    .viewer { flex: 1; background: #252525; border-top: 2px solid #3a3a3a; display: grid; place-items: center; }
    .solid { position: relative; width: 480px; height: 270px; background: #acacac; display: grid; place-items: center; color: #c03a38; }
    .solid i { position: absolute; width: 14px; height: 14px; background: #b3292b; border: 2px solid #4a1516; margin: -6px; }
    .t { top: 0; } .m { top: 50%; } .b { top: 100%; }
    .l { left: 0; } .c { left: 50%; } .r { left: 100%; }
    .cfoot { display: flex; align-items: center; height: 54px; padding: 10px 0 0 10px; color: var(--icon); background: linear-gradient(#2e2e2e 8px, #1f1f1f 8px 10px, #2e2e2e 10px); }
    .cfoot .vr { height: 34px; margin: 0 10px; background: #3c3c3c; }
    .cfoot button { width: 44px; height: 40px; border-radius: 4px; }
    .cfoot output { width: 139px; height: 38px; border: 2px solid var(--edge); border-radius: 4px; background: #292929; color: #a6a6a6; font-size: 20px; line-height: 34px; padding-left: 14px; }
    .cfoot .exp { font-size: 20px; color: var(--sky); width: 64px; justify-content: flex-start; padding-left: 2px; }

    .pick { display: grid; align-items: center; }
    .pick > * { grid-area: 1 / 1; }
    .pick .ic { justify-self: end; margin-right: 10px; pointer-events: none; color: #cfcfcf; }
    .pick select { appearance: none; width: 100%; height: 38px; border: 2px solid var(--edge); border-radius: 4px; background: #242424; color: #d0d0d0; padding: 0 36px 0 11px; text-overflow: ellipsis; outline: 0; }
    .zoom { width: 138px; }
    .res { width: 176px; }
    .cfoot .pick select { font-size: 20px; }

    .side { display: grid; grid-template-columns: 412px 26px; }
    .scroll { background: #222; padding: 2px 4px 0 2px; }
    .scroll i { display: block; width: 20px; height: 512px; border-radius: 10px; background: #383838; }
    .side .tabs { padding: 0 22px 0 25px; justify-content: space-between; }
    .info { height: 264px; border-bottom: 2px solid #202020; }
    .readout { display: grid; grid-template-columns: 55px 137px 44px 1fr; padding: 9px 0 12px 12px; margin-right: 16px; border-bottom: 2px solid #353535; }
    .black { width: 40px; height: 40px; background: #000; margin: 25px 0 0 4px; }
    .readout p { margin: 0; display: flex; }
    .readout p:nth-child(4) { margin-top: 2px; }
    .readout p span { width: 40px; }
    .readout .xy span { width: 32px; }
    .readout .xy p + p b { padding-left: 4px; }
    .readout b { font-weight: 400; }
    .readout .mid { border-left: 2px solid #353535; margin: 5px 0 3px; padding: 40px 0 0 16px; }
    .side h2 + .icon { color: #c0c0c0; }
    .preview .tabs { height: 60px; }
    .preview .body { padding: 0 10px 8px 12px; }
    .transport { display: flex; justify-content: center; gap: 22px; height: 32px; margin: 9px 10px 14px 0; color: var(--icon); }
    hr { border: 0; height: 2px; background: #363636; margin: 11px 0; }
    .lbl { display: block; margin: 8px 0; }
    hr + .lbl { margin-top: 0; }
    .shortcut { display: grid; grid-template-columns: 338px 1fr; align-items: center; }
    .shortcut select { height: 40px; }
    .shortcut .icon { justify-self: end; margin-right: 8px; }
    .include { display: flex; align-items: center; height: 40px; margin: 8px 7px 8px 0; color: var(--icon); }
    .include button { width: 44px; height: 40px; border-radius: 6px; margin-left: 4px; }
    .include .vr { margin: 0 16px 0 5px; height: 38px; }
    .range-lbl { margin-top: 16px; }
    .trio { display: grid; grid-template-columns: 131px 85px 147px; column-gap: 9px; margin-bottom: 8px; }
    .trio .split select { background: linear-gradient(90deg, var(--well) var(--cut, 94px), #363636 0 calc(var(--cut, 94px) + 2px), #242424 0); padding-right: 0; }
    .trio .narrow { --cut: 46px; }

    .timeline { flex: 1; display: flex; flex-direction: column; margin: 0 2px 2px; border: 2px solid #2f83d6; background: var(--panel); border-radius: 0 0 10px 10px; overflow: hidden; }
    .timeline > .tabs { height: 52px; padding-left: 18px; }
    .timeline > .tabs .sq { margin: 0 22px 0 18px; }
    .timeline > .tabs h2 { margin-right: 20px; }
    .split3 { flex: 1; display: grid; grid-template-columns: 1316px minmax(0, 1fr) 34px; }
    .layers { display: flex; flex-direction: column; }
    .lhead { display: flex; align-items: center; height: 72px; }
    .clock { width: 209px; padding-right: 4px; text-align: center; color: var(--sky); font: 700 30px/34px "Open Sans", sans-serif; }
    .clock small { display: block; font: 400 20px/26px "Open Sans", sans-serif; color: #2475b5; }
    .lhead .search { width: 773px; }
    .lhead .tog { display: flex; align-items: center; padding-left: 29px; gap: 16px; color: var(--icon); }
    .lhead .tog button { width: 36px; height: 36px; }
    .lhead .tog button:first-child { margin-right: 15px; }
    .lhead .tog button:last-child { margin-left: 15px; color: var(--blue); }
    .lt { flex: 1; background: linear-gradient(90deg, #2e2e2e 1282px, #282828 0); }
    .lt thead { background: var(--panel); border: solid #000; border-width: 2px 0; padding-left: 2px; }
    .lt tbody { padding-left: 2px; width: 1282px; }
    .lt tr { grid-template-columns: 133px 64px 66px 511px 274px 232px 26px; height: 34px; border-bottom: 2px solid #262626; }
    .lt thead tr { height: 36px; border: 0; color: #a0a0a0; font-size: 17px; }
    .lt th { height: 22px; line-height: 22px; border-left: 2px solid #000; display: flex; align-items: center; color: inherit; padding-left: 10px; }
    .lt th:first-child { border: 0; padding-left: 6px; }
    .lt th.tagc { padding-left: 25px; }
    .lt th .ic { color: var(--icon); }
    .lt .layer { background: #505050; grid-template-columns: 133px 64px 66px 511px 274px 232px; }
    .av { display: flex; gap: 4px; padding-left: 6px; }
    .box { width: 26px; height: 26px; background: #343434; color: #c0c0c0; display: grid; place-items: center; }
    .box.none { background: none; }
    .labelc { display: flex; align-items: center; gap: 5px; padding-left: 12px; color: #bdbdbd; }
    .labelc i { width: 24px; height: 24px; background: #b43836; }
    .num { padding-left: 14px; font-weight: 700; color: #a9a9a9; }
    .nm { display: flex; align-items: center; padding-left: 5px; gap: 4px; }
    .nm i { width: 28px; height: 28px; background: #fff; border: 2px solid #000; flex: none; }
    .nm span { flex: 1; height: 32px; border: 4px solid #a4a4a4; line-height: 24px; padding-left: 3px; color: #b5b5b5; font-weight: 700; }
    .sw { display: flex; gap: 4px; padding-left: 10px; }
    .lt th.sw { padding-left: 8px; }
    .sw .ic { margin: 0 -1px; }
    .sw > span { width: 26px; display: grid; place-items: center; }
    .fx { font: italic 400 24px/24px "Open Sans", sans-serif; color: var(--icon); }
    .par { display: flex; align-items: center; padding: 0 2px 0 10px; gap: 11px; color: #a0a0a0; }
    .par .pick { flex: 1; }
    .par .pick select { height: 30px; border-radius: 0; line-height: 24px; padding: 0 30px 0 12px; background: #222; }
    .lt .prop { grid-template-columns: 270px 504px 274px 232px; }
    .prop .ctl { display: flex; justify-content: flex-end; align-items: center; gap: 15px; padding-right: 6px; color: #c0c0c0; }
    .prop .pn { background: #545454; height: 32px; line-height: 34px; padding-left: 6px; color: #b0b0b0; }
    .prop .val { padding-left: 12px; }
    .prop .val span { display: inline-block; height: 32px; line-height: 32px; background: #4e8c9b; color: #2b4a52; }
    .prop .wp { padding-left: 35px; color: #c0c0c0; }

    .graphcol { display: flex; flex-direction: column; padding-top: 12px; min-width: 0; }
    .tracks { position: relative; flex: 1; display: flex; flex-direction: column; overflow: hidden; }
    .bar { display: flex; gap: 2px; padding: 0 1px 0 2px; background: #252525; flex: none; }
    .bar::before, .bar::after { content: ""; width: 12px; background: var(--blue); margin: 2px 0; border-radius: 10px 0 0 10px; }
    .bar::after { border-radius: 0 10px 10px 0; }
    .bar span { flex: 1; border: solid #000; border-width: 2px 0; background: #6c6c6c; height: 20px; }
    .bar.work::before { border-radius: 6px 0 0 6px; margin-left: 2px; width: 10px; }
    .bar.work::after { border-radius: 0 6px 6px 0; margin-right: 1px; width: 10px; }
    .bar.work span { height: 34px; background: linear-gradient(#7a7a7a 2px, #646464 0); }
    .ruler { display: grid; grid-template-columns: repeat(17, 2fr) 1fr; padding: 8px 14px 0 16px; height: 38px; font-size: 20px; line-height: 20px; }
    .ruler div { width: 2px; display: flex; flex-direction: column; align-items: center; justify-content: space-between; white-space: nowrap; }
    .ruler div::after { content: ""; width: 2px; height: 10px; background: #9d9d9d; }
    .cache { display: grid; grid-template-columns: 16px 1fr 4fr 15fr 15fr 14px; height: 8px; border-bottom: 2px solid #000; background: #2b2b2b; flex: none; }
    .cache i:nth-child(even) { background: #27c020; }
    .plot { position: relative; flex: 1 0 704px; background: linear-gradient(90deg, #383838 16px, #3c3c3c 0 calc(100% - 14px), #353535 0); }
    .plot svg { position: absolute; inset: 0; width: 100%; height: 100%; }
    .plot ol { position: absolute; inset: 23px auto 47px 20px; margin: 0; padding: 0; list-style: none; display: flex; flex-direction: column; justify-content: space-between; font-size: 20px; line-height: 26px; }
    .head { position: absolute; top: 30px; bottom: 0; left: calc(18px + (100% - 30px) / 7); width: 22px; margin-left: -11px; display: flex; flex-direction: column; align-items: center; color: var(--blue); }
    .head::after { content: ""; flex: 1; width: 2px; background: #3a93ee; }
    .editor { display: grid; grid-template-columns: 83px 29px 1fr; height: 152px; margin: 8px 12px 0 12px; background: #1c1c1c; color: #d8d8d8; font: 400 36px/54px "Liberation Mono", monospace; flex: none; }
    .editor .ln { background: #1a1a1a; color: #5d5d5d; padding-left: 23px; }
    .editor .dots { background: radial-gradient(circle, #8a8a8a 1px, transparent 1px) 12px -1px / 2px 16px repeat-y, #242424; }
    .editor pre, .editor code { font: inherit; margin: 0; }
    .editor pre { padding-left: 2px; }
    .p { color: #a3933a; } .y { color: #e8cf94; } .k { color: #4196d8; }
    .gtools { display: flex; justify-content: center; align-items: flex-start; gap: 54px; height: 62px; padding-top: 17px; flex: none; }
    .gtools div { display: flex; gap: 4px; }
    .gtools button { width: 46px; height: 42px; border-radius: 4px; color: var(--icon); }
    .rail { display: flex; flex-direction: column; align-items: flex-end; padding: 76px 4px 0 0; gap: 9px; color: var(--icon); background: linear-gradient(transparent 110px, #000 110px 112px, transparent 0); border-left: 1px solid #222; }
    .tfoot { display: flex; height: 34px; background: #292929; flex: none; }
    .tfoot > div { display: flex; align-items: center; width: 1532px; background: var(--panel); border-top: 2px solid #000; padding-left: 8px; color: var(--icon); font-size: 20px; }
    .tfoot .modes { display: flex; gap: 4px; }
    .tfoot .modes button { width: 34px; height: 30px; }
    .tfoot p { margin: 0 0 0 52px; color: #9d9d9d; width: 573px; white-space: pre; }
    .tfoot p b { color: #63d5b0; font-weight: 600; margin-left: 6px; }
    .tfoot .toggle { width: 267px; height: 30px; background: #242424; border: 1px solid var(--edge); border-radius: 4px; color: #a6a6a6; font-size: 21px; }
    .zoomer { display: flex; align-items: center; gap: 20px; margin-left: auto; padding-right: 8px; }
    .zoomer input { appearance: none; width: 100px; height: 22px; background: linear-gradient(transparent 6px, #555 6px 10px, transparent 0); }
    .zoomer input::-webkit-slider-thumb { appearance: none; width: 22px; height: 20px; border-radius: 50%; border: 4px solid #9a9a9a; background: var(--panel); }
  `;

  private pick(id: string, value: string, cls = "", label = "") {
    return html`<span class="pick ${cls}"><select id=${id} aria-label=${label || nothing}><option>${value}</option></select>${chev}</span>`;
  }

  private menubar() {
    return html`<header class="menubar">
      ${apple}
      <nav><a class="app" href="#">After Effects</a>${menus.map((m) => html`<a href="#">${m}</a>`)}</nav>
      <span class="grow"></span>${status}<time>Mon Mar 20  3:55 AM</time>
    </header>
    <div class="titlebar"><span class="lights"><i></i><i></i><i></i></span><span>Adobe After Effects 2023 - Untitled Project *</span></div>`;
  }

  private toolbar() {
    const btn = ([name, icon, cls]: [string, TemplateResult, string]) =>
      name === "|" ? html`<span class="vr"></span>` : html`<button class=${cls} aria-label=${name}>${icon}</button>`;
    return html`<div class="toolbar">
      <span class="grip"></span>
      <div class="tools">${tools.map(btn)}</div>
      <span class="vr tall after-tools"></span>
      <div class="axes">${axes.map(btn)}</div>
      <span class="vr"></span>
      <label class="check"><input type="checkbox" /><span>Snapping</span></label>
      <span class="snap">${ic(26, 30, svg`<path d="M-12 14l8-10 8 10M-4 4L3-3M5-5l3-3" fill="none" stroke="currentColor" stroke-width="2"/><path d="M3-13h10v10l-3-3-3 2-3-3 3-3z"/>`)}</span>
      <button class="on big" aria-label="Snap to features">${ic(34, 34, svg`<path d="M-12-6v-7h7M5-13h7v7M12 6v7H5M-5 13h-7V6" fill="none" stroke="currentColor" stroke-width="3"/><path d="M-5-8v4h-4M5-8v4h4M-5 8V4h-4M5 8V4h4M-2-1h4" fill="none" stroke="currentColor" stroke-width="2"/>`)}</button>
      <span class="grow"></span>
      <span class="vr tall flush"></span>
      <div class="spaces">
        <button>Default</button><button class="cur">Motion Tracking ${burger}</button>
        <button>Essential Graphics</button><button>Paint</button><button>Color</button><button>Expressions</button>
      </div>
      <button class="icon ws-more" aria-label="More workspaces">${more}</button>
      <span class="vr tall before-sync"></span>
      <button class="icon" aria-label="Sync settings">${ic(40, 24, svg`<rect x="-19" y="-11" width="38" height="22" rx="2"/><circle cx="-8" cy="0" r="5" fill="none" stroke="#2e2e2e" stroke-width="3"/><path d="M-8-9V9M-16 0H0M-14-6L-2 6M-14 6L-2-6" stroke="#2e2e2e" stroke-width="2"/><circle cx="-8" cy="0" r="2.500"/><path d="M3-4l6-5v3h7v4H9v3zM17 5l-6 5V7H5V3h6V0z" fill="#2e2e2e"/>`)}</button>
      <label class="help">${lensPlain}<input placeholder="Search Help" aria-label="Search Help" /></label>
    </div>`;
  }

  private project() {
    return html`<section class="panel project">
      <div class="tabs">
        <button class="ptab">Project <span class="icon">${burger}</span></button>
        <button class="effects"><span class="sq red"></span><span>Effect Controls <b>White Solid 1</b></span></button>
        <span class="vr"></span><button class="icon" aria-label="More panels">${more}</button>
      </div>
      <div class="summary"><span class="thumb"></span><div><strong>Comp 2 ${ic(18, 14, fill("M-7-5H7L0 6z"))}</strong>3840 x 2160 (1.00)<br />Δ 0:00:01:11, 23.976 fps</div></div>
      <label class="search">${lens}<input aria-label="Search project" /></label>
      <table class="plist">
        <thead><tr><th class="icon">${tag}</th><th></th><th>Name</th></tr></thead>
        <tbody>
          <tr><td><i class="chip"></i></td><td></td><td class="icon">${film}</td><td>Comp 1</td><td class="icon flowc">${mainIcons.flow}</td></tr>
          <tr class="sel"><td><i class="chip"></i></td><td></td><td class="icon">${film}</td><td>Comp 2</td><td></td></tr>
          <tr><td><i class="chip y"></i></td><td class="icon twirl">${chevR}</td><td class="icon fold">${folder}</td><td>Solids</td><td></td></tr>
        </tbody>
      </table>
      <div class="pfoot">
        <button aria-label="Interpret footage">${mainIcons.interpret}</button><button aria-label="New folder">${folder}</button>
        <button aria-label="New composition">${film}</button><button aria-label="Project settings">${mainIcons.rocket}</button>
        <span class="depth"><button class="bpc">16 bpc</button><button aria-label="Delete">${mainIcons.trash}</button></span>
        <span class="hbar"><i></i></span>
      </div>
    </section>`;
  }

  private comp() {
    const b = (k: string, name: string, cls = "") => html`<button class=${cls} aria-label=${name}>${mainIcons[k]}</button>`;
    return html`<section class="panel comp">
      <div class="tabs">${cross}<span class="sq"></span><span class="icon">${unlock}</span>
        <h2>Composition <span class="sky">Comp 2</span></h2><span class="icon">${burger}</span></div>
      <div class="crumb"><button>Comp 2</button></div>
      <div class="viewer"><div class="solid">
        ${["t l", "t c", "t r", "m l", "m r", "b l", "b c", "b r"].map((c) => html`<i class=${c}></i>`)}
        ${ic(42, 42, svg`<path d="M0-16L16 0 0 16-16 0z" fill="none" stroke="#f2f2f2" stroke-width="4"/><path d="M0-16L16 0 0 16-16 0z" fill="none" stroke="currentColor" stroke-width="2"/><path d="M0-20v9M0 11v9M-20 0h9M11 0h9" stroke="#f2f2f2" stroke-width="4"/><path d="M0-20v9M0 11v9M-20 0h9M11 0h9M0-5V5M-5 0H5" stroke="#555" stroke-width="1.500"/><circle r="6" fill="none" stroke="#f2f2f2" stroke-width="4"/><circle r="6" fill="none" stroke="currentColor" stroke-width="2"/>`)}
      </div></div>
      <div class="cfoot">
        ${this.pick("zoom", "12.5%", "zoom", "Magnification")}<span class="vr"></span>
        ${this.pick("res", "(Custom…)", "res", "Resolution")}<span class="vr"></span>
        ${b("fast", "Fast previews", "on white")}${b("checker", "Transparency grid")}${b("mask", "Mask visibility", "on")}${b("region", "Region of interest")}${b("grid", "Guides")}
        <span class="vr"></span>${b("rgb", "Channels")}${b("aperture", "Reset exposure")}<button class="exp">+0.0</button>
        <span class="vr"></span>${b("camera", "Take snapshot")}${b("snap", "Show snapshot", "faint")}<span class="vr"></span>
        <output>0:00:00:05</output><span class="vr"></span>
      </div>
    </section>`;
  }

  private side() {
    return html`<aside class="side">
      <div class="panel">
        <section class="info">
          <div class="tabs"><h2>Info</h2><span class="icon">${burger}</span></div>
          <div class="readout">
            <div><div class="black"></div></div>
            <div><p>R :</p><p>G :</p><p>B :</p><p><span>A :</span><b>0.0%</b></p></div>
            <div class="mid">${ic(22, 22, line("M0-9V9M-9 0H9", 2))}</div>
            <div class="xy"><p><span>X :</span><b>-2640</b></p><p><span>Y :</span><b>3808</b></p></div>
          </div>
        </section>
        <section class="preview">
          <div class="tabs"><h2>Preview</h2><span class="icon">${burger}</span></div>
          <div class="body">
            <div class="transport">${transport.map(([n, i]) => html`<button aria-label=${n}>${i}</button>`)}</div>
            <hr />
            <label class="lbl" for="shortcut">Shortcut</label>
            <div class="shortcut">${this.pick("shortcut", "Spacebar")}
              <button class="icon" aria-label="Reset">${ic(30, 30, svg`<path d="M-8 1A9 9 0 1 1 5 7" fill="none" stroke="currentColor" stroke-width="4"/><path d="M-15-1H-1L-7 7zM-12 10h24v2h-24z"/>`)}</button></div>
            <div class="include"><span>Include:</span><span class="grow"></span>
              <button class="on" aria-label="Video">${ic(30, 24, svg`<path d="M-13 0C-7-11 7-11 13 0 7 11-7 11-13 0z" fill="none" stroke="currentColor" stroke-width="3"/><path d="M0-7a7 7 0 1 0 7 7 4 4 0 0 1-5-5z"/>`)}</button>
              <button class="on" aria-label="Audio">${ic(38, 30, svg`<path d="M-18-6h7l9-8v28l-9-8h-7z"/><path d="M3-5c3 3 3 7 0 10M7-9c6 5 6 13 0 18M12-13c8 7 8 19 0 26" fill="none" stroke="currentColor" stroke-width="2"/>`)}</button>
              <button aria-label="Overlays">${ic(32, 30, svg`<rect x="-12" y="-11" width="24" height="22" fill="none" stroke="currentColor" stroke-width="2"/><circle r="3"/><path d="M-14-13h5v5h-5zM9-13h5v5H9zM-14 8h5v5h-5zM9 8h5v5H9zM-3-14h6v4h-6zM-3 10h6v4h-6zM-14-3h4v6h-4zM10-3h4v6h-4z"/>`)}</button>
              <span class="vr"></span>
              ${ic(30, 26, svg`<path d="M-7-6h-5v15h25V-5" fill="none" stroke="currentColor" stroke-width="4"/><path d="M-3-12L12-5-3 2z"/>`)}
            </div>
            <label class="check"><input type="checkbox" />Cache Before Playback</label>
            <label class="lbl range-lbl" for="range">Range</label>${this.pick("range", "Work Area Extended By Current ...")}
            <label class="lbl" for="from">Play From</label>${this.pick("from", "Current Time")}
            <div class="trio">
              <label class="lbl" for="rate">Frame Rate</label><label class="lbl" for="skip">Skip</label><label class="lbl" for="reso">Resolution</label>
              ${this.pick("rate", "(23.98)", "split")}${this.pick("skip", "0", "split narrow")}${this.pick("reso", "Auto")}
            </div>
            <label class="check"><input type="checkbox" />Full Screen</label>
            <hr />
            <span class="lbl">On (Spacebar) Stop:</span>
            <label class="check"><input type="checkbox" />If caching, play cached frames</label>
          </div>
        </section>
      </div>
      <div class="scroll"><i></i></div>
    </aside>`;
  }

  private layerTable() {
    return html`<table class="lt">
      <thead><tr>
        <th class="av">${eye}${speaker}${ic(26, 24, svg`<circle r="7"/>`)}${lock}</th>
        <th class="tagc">${tag}</th><th>#</th><th>Source Name</th>
        <th class="sw"><span>${shy}</span><span>${sun}</span><span>${steps}</span><span class="fx">fx</span><span>${blend}</span><span>${blur}</span><span>${adjust}</span><span>${cube}</span></th>
        <th>Parent &amp; Link</th><th></th>
      </tr></thead>
      <tbody>${opacities.map((v, i) => html`
        <tr class="layer">
          <td class="av"><span class="box">${eye}</span><span class="box none"></span><span class="box"></span><span class="box"></span></td>
          <td class="labelc">${chevD}<i></i></td>
          <td class="num">${i + 1}</td>
          <td class="nm"><i></i><span>White Solid 1</span></td>
          <td class="sw">${[shy, "", quality, null, null, "", "", ""].map((s) => html`<span class=${classMap({ box: true, none: s === null })}>${s}</span>`)}</td>
          <td class="par">${whip}${this.pick(`parent${i}`, "None", "", `Parent of layer ${i + 1}`)}</td>
        </tr>
        <tr class="prop">
          <td class="ctl">${chevR}${stopwatch}</td><td class="pn">Opacity</td>
          <td class="val"><span>${v}%</span></td><td class="wp">${whip}</td>
        </tr>`)}
      </tbody>
    </table>`;
  }

  private graph() {
    const grid = "#1f1f1f";
    return html`<div class="graphcol">
      <div class="tracks">
        <div class="bar"><span></span></div>
        <div class="ruler">${rulerLabels.map((l) => html`<div>${l}</div>`)}</div>
        <div class="bar work"><span></span></div>
        <div class="cache"><i></i><i></i><i></i><i></i><i></i></div>
        <div class="plot">
          <svg viewBox="0 0 2098 704" preserveAspectRatio="none" fill="none">
            ${rulerLabels.map((_, k) => svg`<path d="M${X0 + k * 2 * FRAME} 0V704" stroke=${grid} stroke-width="2"/>`)}
            ${[1, 2, 3, 4, 5, 6, 7, 8, 9].map((k) => svg`<path d="M0 ${Y0 - k * 60.7 - 2}H2098" stroke=${grid} stroke-width="2"/>`)}
            <path d="M0 ${Y0 - 2}H2098" stroke=${grid} stroke-width="4" />
            <path d="M0 ${Y100 + 3}H2098M0 ${Y0 + 3}H17" stroke="#000" stroke-width="2" />
            ${ramps.map((d) => svg`<path d=${d} transform="translate(1 2)" stroke="#1c2a2e" stroke-width="2"/>`)}
            ${ramps.map((d) => svg`<path d=${d} stroke="#67bdd6" stroke-width="3"/>`)}
            <path d="M0 ${Y100}H2098" stroke="#67bdd6" stroke-width="3" />
          </svg>
          <ol>${[100, 90, 80, 70, 60, 50, 40, 30, 20, 10, 0].map((v) => html`<li>${v === 100 ? "100 %" : v}</li>`)}</ol>
        </div>
        <div class="head">${ic(22, 28, svg`<path d="M-11-14h22v12L3 14h-6L-11-2z"/><path d="M-3-2h6M0-2v14" stroke="#12304d" stroke-width="2"/>`)}</div>
      </div>
      <div class="editor"><span class="ln">1</span><span class="dots"></span>
        <pre><code><span class="p">(</span>More than one selected <span class="y">property</span> <span class="k">has</span> an expression<span class="p">.)</span></code></pre></div>
      <div class="gtools">${graphTools.map((g) => html`<div>${g.map(([n, i, c]) => html`<button class=${c} aria-label=${n}>${i}</button>`)}</div>`)}</div>
    </div>`;
  }

  private timeline() {
    return html`<section class="timeline">
      <div class="tabs">${cross}<span class="sq"></span><h2>Comp 2</h2><span class="icon">${burger}</span></div>
      <div class="split3">
        <div class="layers">
          <div class="lhead">
            <div class="clock">0:00:00:05<small>00005 (23.976 fps)</small></div>
            <label class="search">${lens}<input aria-label="Search layers" /></label>
            <div class="tog">
              <button aria-label="Mini-flowchart">${ic(36, 34, svg`<path d="M-16-9h10v8h-10zM4-10h12v7H4zM4 2h12v7H4z"/><path d="M-18-5h5M-6-6H4M0-6V6h4" fill="none" stroke="currentColor" stroke-width="2"/><path d="M10 11h9l-4.500 6z"/>`)}</button>
              <button aria-label="Hide shy layers">${ic(34, 34, svg`<path d="M-16 2h32v12h-32z" fill="#757575"/><path d="M-15 0v-5l3 2 3-2C-9-17 9-17 9-5l3 2 3-2v5H3V9h-6V0zM-4-10a2.500 3 0 1 0 .1 0zM4-10a2.500 3 0 1 0 .1 0z" fill-rule="evenodd"/>`)}</button>
              <button aria-label="Frame blending">${ic(34, 36, svg`<path d="M-6-16h20v26H-6zM-4-14v2h2v-2zM-4-9v2h2v-2zM-4-4v2h2v-2zM-4 1v2h2V1zM-4 6v2h2V6zM10-14v2h2v-2zM10-9v2h2v-2zM10-4v2h2v-2zM10 1v2h2V1zM10 6v2h2V6zM1-4v2h6v-2z" fill-rule="evenodd"/><path d="M-14-9h6v21H6v4h-20zM-12-6v2h2v-2zM-12-1v2h2v-2zM-12 4v2h2V4zM-12 9v2h2V9z" fill-rule="evenodd"/>`)}</button>
              <button aria-label="Motion blur">${ic(34, 34, svg`<circle cx="-4" cy="4" r="10" fill="#2e2e2e" stroke="currentColor" stroke-width="2"/><circle cx="-1" cy="1" r="10" fill="#2e2e2e" stroke="currentColor" stroke-width="2"/><circle cx="4" cy="-4" r="10" fill="#6c6c6c" stroke="currentColor" stroke-width="2"/>`)}</button>
              <button aria-label="Graph editor">${ic(36, 36, line("M-13-11h28v24h-28zM-9-5c10 0 8 13 19 13M-8-16v5M0-16v5M8-16v5M-17-5h4M-17 3h4M-17 10h4", 2))}</button>
            </div>
          </div>
          ${this.layerTable()}
        </div>
        ${this.graph()}
        <div class="rail">${ic(22, 30, fill("M-11-14h22V5L0 14-11 5z"))}${ic(30, 28, svg`<path d="M1-8h13V6H1z"/><path d="M-12 3L0-12V2" fill="none" stroke="currentColor" stroke-width="2"/><circle cx="-1" cy="5" r="6" fill="#2e2e2e" stroke="currentColor" stroke-width="2"/>`)}</div>
      </div>
      <div class="tfoot"><div>
        <span class="modes">
          <button class="on" aria-label="Layer switches">${ic(28, 26, line("M-10-11H0V0h-10zM-5-5H5V5H-5zM0 1h10v11H0z", 2.500))}</button>
          <button aria-label="Transfer controls">${ic(28, 26, svg`<circle cx="-3" cy="-3" r="8" fill="none" stroke="currentColor" stroke-width="2"/><rect x="-2" y="-1" width="12" height="12" fill="none" stroke="currentColor" stroke-width="2"/>`)}</button>
          <button aria-label="In and out">${ic(28, 26, svg`<path d="M-5-11H5V11H-5z" fill="#777"/><path d="M-4-11v7l-7 4 7 4v7M4-11v7l7 4-7 4v7" fill="none" stroke="currentColor" stroke-width="3"/>`)}</button>
          <button aria-label="Render time">${ic(28, 26, svg`<circle cx="-4" cy="-3" r="8"/><path d="M-13 11l4-6H3l3-8 2 0v8l4-8v10l-5 4z"/>`)}</button>
        </span>
        <p>Frame Render Time <b>1ms</b></p>
        <button class="toggle">Toggle Switches / Modes</button>
        <span class="zoomer">${ic(20, 14, fill("M-10 5l5-6 2 3 5-8 8 11z"))}<input type="range" min="0" max="100" value="0" aria-label="Time zoom" />${ic(34, 18, fill("M-17 8l8-10 3 3-3 7zM-6 8L4-9 16 8z"))}</span>
      </div></div>
    </section>`;
  }

  render() {
    return html`${this.menubar()}${this.toolbar()}
      <main class="workspace">${this.project()}${this.comp()}${this.side()}</main>
      ${this.timeline()}`;
  }
}
